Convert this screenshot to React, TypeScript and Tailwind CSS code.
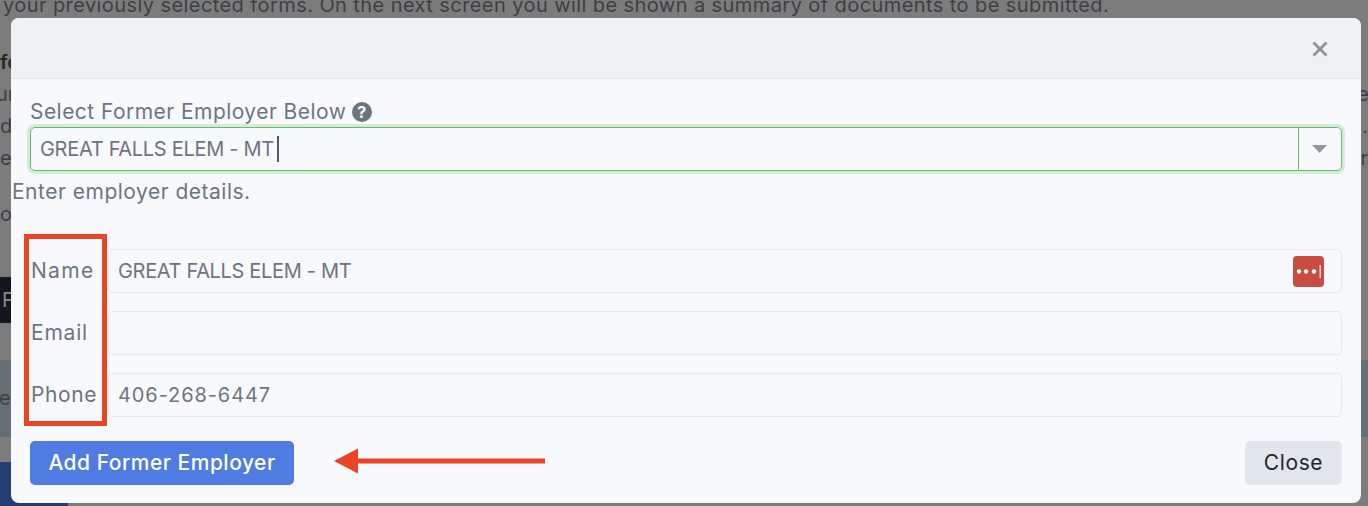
const FONT = "font-['Inter','Noto_Sans',sans-serif]";

function EmployerRow({ label, labelClass, value, valueClass, action }: { label: string; labelClass: string; value?: string; valueClass?: string; action?: boolean }) {
  return (
    <div className="flex items-center h-[44px]">
      <label className={`w-[87px] pl-[10px] text-[21px] text-[#6c757d] ${labelClass}`}>{label}</label>
      <div className="flex-1 h-[44px] flex items-center justify-between pl-[9px] pr-[17px] border border-[#e3e8ee] rounded-[5px] text-[20px] text-[#6c757d]">
        <span className={valueClass}>{value}</span>
        {action && <ManagerIcon />}
      </div>
    </div>
  );
}

function ManagerIcon() {
  return (
    <svg width="31" height="31" viewBox="0 0 31 31">
      <rect width="31" height="31" rx="4" fill="#c94c40" />
      <circle cx="6" cy="15.5" r="2.2" fill="#fff" />
      <circle cx="13" cy="15.5" r="2.2" fill="#fff" />
      <circle cx="21" cy="15.5" r="2.2" fill="#fff" />
      <rect x="26.5" y="9" width="1.5" height="13" fill="#f3d5d2" />
    </svg>
  );
}

function PageBehind() {
  return (
    <div className="h-full flex flex-col text-[20px] leading-[32px] text-[#3e3f44] whitespace-nowrap">
      <p className="h-[20px] pl-[3px] leading-[10px] tracking-[0.42px]">your previously selected forms. On the next screen you will be shown a summary of documents to be submitted.</p>
      <p className="mt-[26px] h-[32px] font-semibold text-[#26272b]">fo</p>
      <div className="flex justify-between h-[32px]"><span className="-ml-[4px]">ur</span><span className="-mr-[1px]">e</span></div>
      <div className="flex justify-between h-[32px]"><span>d c</span><span>.</span></div>
      <div className="flex justify-between h-[32px]"><span>er</span><span>r</span></div>
      <p className="mt-[24px] h-[32px]">ou</p>
      <div className="mt-[47px] h-[46px] w-[11px] bg-[#14161f] text-[#8a8a8a] leading-[46px] pl-[2px]">F</div>
      <div className="mt-[37px] h-[77px] bg-[#666e75] leading-[77px] -ml-[1px]">e</div>
      <div className="mt-[25px] h-[44px] w-[68px] bg-[#253d73]" />
    </div>
  );
}

export default function App() {
  return (
    <div className={`relative w-[1368px] h-[506px] overflow-hidden bg-[#7c7c7c] ${FONT}`}>
      <PageBehind />

      <div className="absolute left-[11px] top-[18px] w-[1350px] h-[485px] bg-[#f8f9fd] rounded-[8px] flex flex-col">
        <div className="h-[61px] shrink-0 bg-[#f0f1f5] border-b border-[#e1e8ec] rounded-t-[8px] flex justify-end items-center pr-[33px]">
          <svg width="16" height="16" viewBox="0 0 16 16" className="mt-[1px]">
            <path d="M1.5 1.5 L14.5 14.5 M14.5 1.5 L1.5 14.5" stroke="#8f9298" strokeWidth="2.8" />
          </svg>
        </div>

        <div className="flex flex-col pr-[19px]">
          <div className="mt-[20px] pl-[19px] flex items-center gap-[6px] h-[26px] text-[21px] tracking-[0.45px] text-[#6c757d]">
            Select Former Employer Below
            <svg width="20" height="20" viewBox="0 0 20 20">
              <circle cx="10" cy="10" r="10" fill="#6c757d" />
              <text x="10" y="15.5" textAnchor="middle" fontSize="16" fontWeight="700" fill="#f8f9fd">?</text>
            </svg>
          </div>

          <div className="ml-[19px] mt-[2px] h-[44px] flex border border-[#66bb6f] rounded-[5px] shadow-[0_0_0_3px_#d3ecd7]">
            <div className="flex-1 flex items-center pl-[9px] text-[20px] tracking-[-0.3px] text-[#6c757d]">
              GREAT FALLS ELEM - MT
              <span className="ml-[3px] w-[2px] h-[26px] bg-[#555b62]" />
            </div>
            <div className="w-[43px] border-l border-[#66bb6f] flex items-center justify-center">
              <svg width="16" height="8" viewBox="0 0 16 8"><path d="M0 0 H15 L7.5 8 Z" fill="#93969c" /></svg>
            </div>
          </div>

          <p className="mt-[6px] pl-[1px] h-[30px] leading-[30px] text-[21px] tracking-[0.5px] text-[#6c757d]">Enter employer details.</p>

          <div className="mt-[42px] ml-[10px] flex flex-col gap-[18px]">
            <EmployerRow label="Name" labelClass="tracking-[1.3px]" value="GREAT FALLS ELEM - MT" valueClass="tracking-[-0.33px]" action />
            <EmployerRow label="Email" labelClass="tracking-[0.8px]" />
            <EmployerRow label="Phone" labelClass="tracking-[0.6px]" value="406-268-6447" valueClass="tracking-[0.9px]" />
          </div>

          <div className="mt-[24px] pl-[19px] flex justify-between">
            <button className="w-[264px] h-[44px] rounded-[5px] bg-[#4e7ce2] text-white text-[21px] tracking-[0.5px] font-medium">Add Former Employer</button>
            <button className="w-[97px] h-[44px] rounded-[5px] bg-[#e0e6eb] text-[#212529] text-[21px] tracking-[0.6px]">Close</button>
          </div>
        </div>
      </div>

      {/* annotations on top of the modal */}
      <div className="absolute left-[24px] top-[234px] w-[83px] h-[192px] border-[5px] border-[#ea4425]" />
      <svg className="absolute left-[334px] top-[448px]" width="212" height="26" viewBox="0 0 212 26">
        <path d="M0 13 L24 0.5 V25.5 Z" fill="#ea4425" />
        <rect x="23" y="10.5" width="188" height="5" fill="#ea4425" />
      </svg>
    </div>
  );
}
